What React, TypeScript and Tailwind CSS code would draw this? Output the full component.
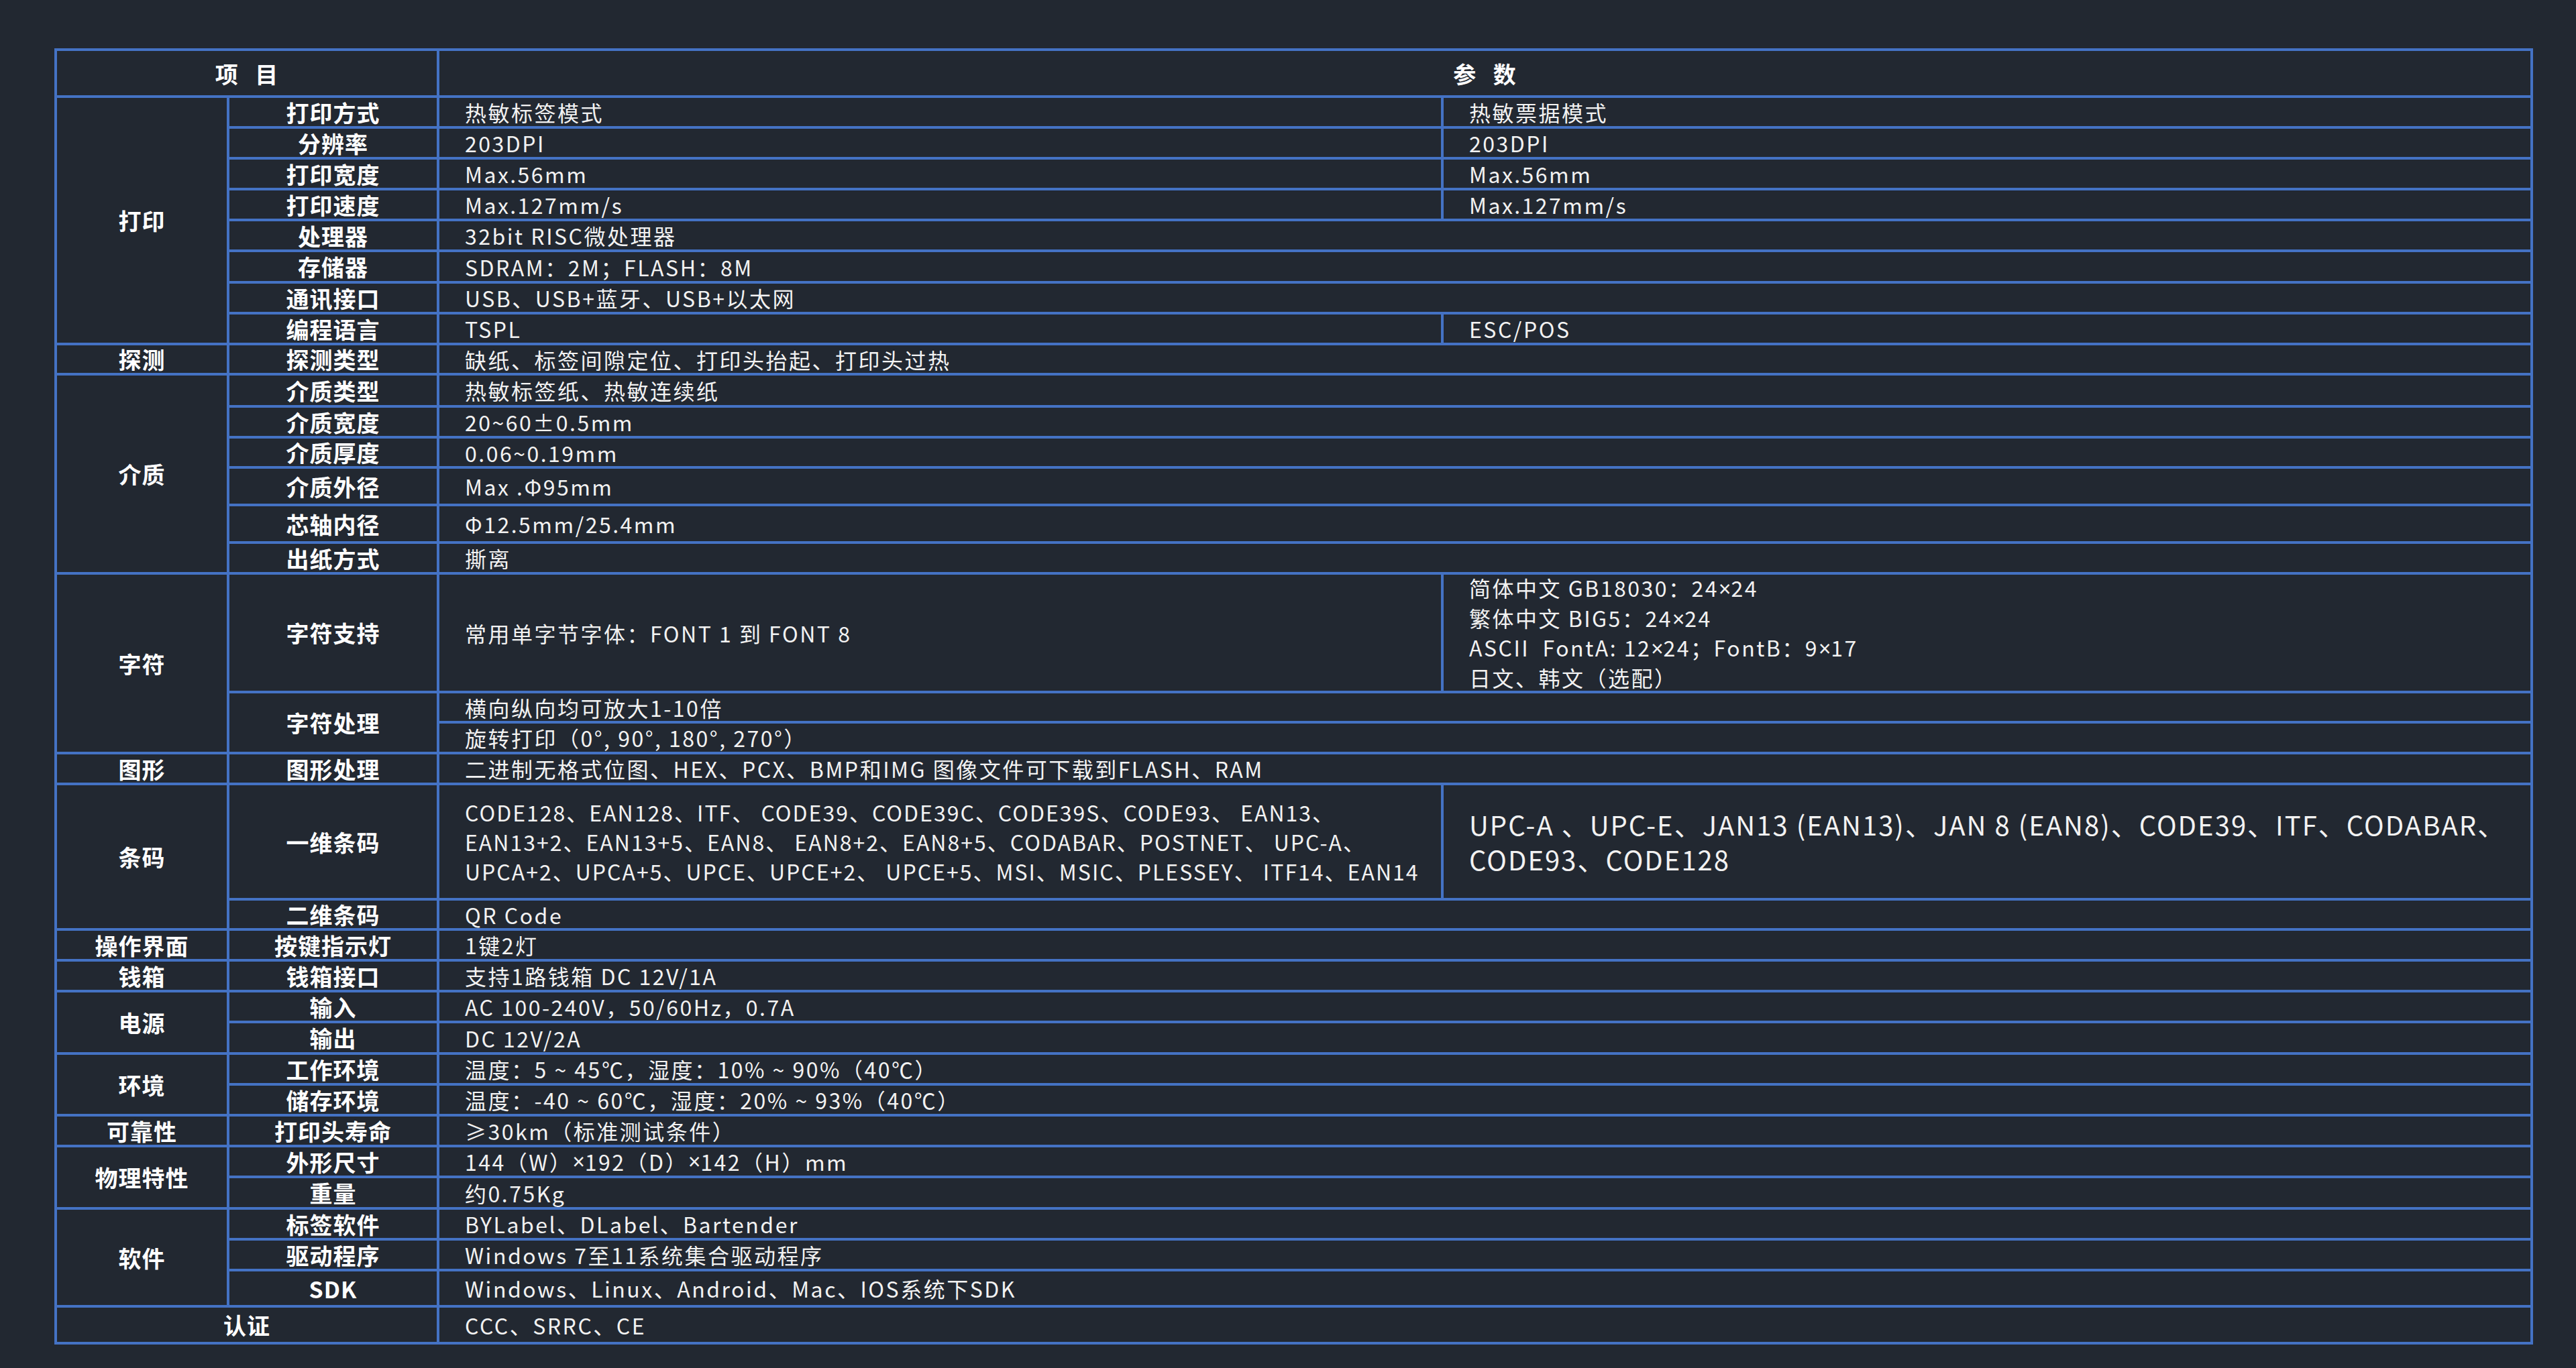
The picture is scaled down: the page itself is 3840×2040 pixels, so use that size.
import React from "react";

const V = ({ children, span, className }: { children: React.ReactNode; span?: boolean; className?: string }) => (
  <div
    className={
      "flex items-center bg-[#222831] pl-[38px] text-[#f2f2f2] whitespace-nowrap " +
      (span ? "col-span-2 " : "") +
      (className ?? "text-[32px] tracking-[2.5px]")
    }
  >
    {children}
  </div>
);

const L = ({ children, className }: { children: React.ReactNode; className?: string }) => (
  <div
    className={
      "flex items-center justify-center bg-[#222831] text-[34px] font-bold tracking-[1px] text-white " +
      (className ?? "")
    }
  >
    {children}
  </div>
);

// narrow multiplication sign, the CJK one is full width
const X = () => <span className="font-['Noto_Sans',sans-serif] tracking-normal">×</span>;

const App = () => {
  return (
    <div className="w-[3840px] h-[2040px] bg-[#222831] pt-[72px] pl-[81px] font-['Noto_Sans_CJK_SC',sans-serif]">
      <div className="inline-grid grid-cols-[253px_309px_1493px_1620px] grid-rows-[66px_42px_42px_42px_42px_42px_43px_42px_42px_41px_44px_42px_41px_52px_52px_42px_173px_41px_42px_42px_168px_41px_42px_42px_42px_43px_42px_42px_42px_42px_43px_42px_42px_50px_51px] gap-[4px] p-[4px] bg-[#4472c4]">
        {/* header */}
        <L className="col-span-2 [word-spacing:16px]">项 目</L>
        <L className="col-span-2 [word-spacing:16px]">参 数</L>

        {/* 打印 */}
        <L className="row-span-8">打印</L>
        <L>打印方式</L>
        <V>热敏标签模式</V>
        <V>热敏票据模式</V>
        <L>分辨率</L>
        <V>203DPI</V>
        <V>203DPI</V>
        <L>打印宽度</L>
        <V>Max.56mm</V>
        <V>Max.56mm</V>
        <L>打印速度</L>
        <V>Max.127mm/s</V>
        <V>Max.127mm/s</V>
        <L>处理器</L>
        <V span>32bit RISC微处理器</V>
        <L>存储器</L>
        <V span>SDRAM：2M；FLASH：8M</V>
        <L>通讯接口</L>
        <V span>USB、USB+蓝牙、USB+以太网</V>
        <L>编程语言</L>
        <V>TSPL</V>
        <V>ESC/POS</V>

        {/* 探测 */}
        <L>探测</L>
        <L>探测类型</L>
        <V span>缺纸、标签间隙定位、打印头抬起、打印头过热</V>

        {/* 介质 */}
        <L className="row-span-6">介质</L>
        <L>介质类型</L>
        <V span>热敏标签纸、热敏连续纸</V>
        <L>介质宽度</L>
        <V span>20~60±0.5mm</V>
        <L>介质厚度</L>
        <V span>0.06~0.19mm</V>
        <L>介质外径</L>
        <V span>Max .Φ95mm</V>
        <L>芯轴内径</L>
        <V span>Φ12.5mm/25.4mm</V>
        <L>出纸方式</L>
        <V span>撕离</V>

        {/* 字符 */}
        <L className="row-span-3">字符</L>
        <L>字符支持</L>
        <V>常用单字节字体：FONT 1 到 FONT 8</V>
        <V className="text-[32px] tracking-[2.5px] leading-[43.5px]">
          <div>
            <div>简体中文 GB18030：24<X />24</div>
            <div>繁体中文 BIG5：24<X />24</div>
            <div>ASCII&nbsp; FontA: 12<X />24；FontB：9<X />17</div>
            <div>日文、韩文（选配）</div>
          </div>
        </V>
        <L className="row-span-2">字符处理</L>
        <V span>横向纵向均可放大1-10倍</V>
        <V span>旋转打印（0°, 90°, 180°, 270°）</V>

        {/* 图形 */}
        <L>图形</L>
        <L>图形处理</L>
        <V span>二进制无格式位图、HEX、PCX、BMP和IMG 图像文件可下载到FLASH、RAM</V>

        {/* 条码 */}
        <L className="row-span-2">条码</L>
        <L>一维条码</L>
        <V className="text-[32px] tracking-[2px] leading-[44px]">
          <div>
            <div>CODE128、EAN128、ITF、 CODE39、CODE39C、CODE39S、CODE93、 EAN13、</div>
            <div>EAN13+2、EAN13+5、EAN8、 EAN8+2、EAN8+5、CODABAR、POSTNET、 UPC-A、</div>
            <div>UPCA+2、UPCA+5、UPCE、UPCE+2、 UPCE+5、MSI、MSIC、PLESSEY、 ITF14、EAN14</div>
          </div>
        </V>
        <V className="text-[40px] leading-[52px] tracking-[2px]">
          <div>
            <div>UPC-A 、UPC-E、JAN13 (EAN13)、JAN 8 (EAN8)、CODE39、ITF、CODABAR、</div>
            <div>CODE93、CODE128</div>
          </div>
        </V>
        <L>二维条码</L>
        <V span>QR Code</V>

        {/* 操作界面 */}
        <L>操作界面</L>
        <L>按键指示灯</L>
        <V span>1键2灯</V>

        {/* 钱箱 */}
        <L>钱箱</L>
        <L>钱箱接口</L>
        <V span>支持1路钱箱 DC 12V/1A</V>

        {/* 电源 */}
        <L className="row-span-2">电源</L>
        <L>输入</L>
        <V span>AC 100-240V，50/60Hz，0.7A</V>
        <L>输出</L>
        <V span>DC 12V/2A</V>

        {/* 环境 */}
        <L className="row-span-2">环境</L>
        <L>工作环境</L>
        <V span>温度：5 ~ 45℃，湿度：10% ~ 90%（40℃）</V>
        <L>储存环境</L>
        <V span>温度：-40 ~ 60℃，湿度：20% ~ 93%（40℃）</V>

        {/* 可靠性 */}
        <L>可靠性</L>
        <L>打印头寿命</L>
        <V span>≥30km（标准测试条件）</V>

        {/* 物理特性 */}
        <L className="row-span-2">物理特性</L>
        <L>外形尺寸</L>
        <V span>144（W）<X />192（D）<X />142（H）mm</V>
        <L>重量</L>
        <V span>约0.75Kg</V>

        {/* 软件 */}
        <L className="row-span-3">软件</L>
        <L>标签软件</L>
        <V span>BYLabel、DLabel、Bartender</V>
        <L>驱动程序</L>
        <V span>Windows 7至11系统集合驱动程序</V>
        <L>SDK</L>
        <V span>Windows、Linux、Android、Mac、IOS系统下SDK</V>

        {/* 认证 */}
        <L className="col-span-2">认证</L>
        <V span>CCC、SRRC、CE</V>
      </div>
    </div>
  );
};

export default App;
